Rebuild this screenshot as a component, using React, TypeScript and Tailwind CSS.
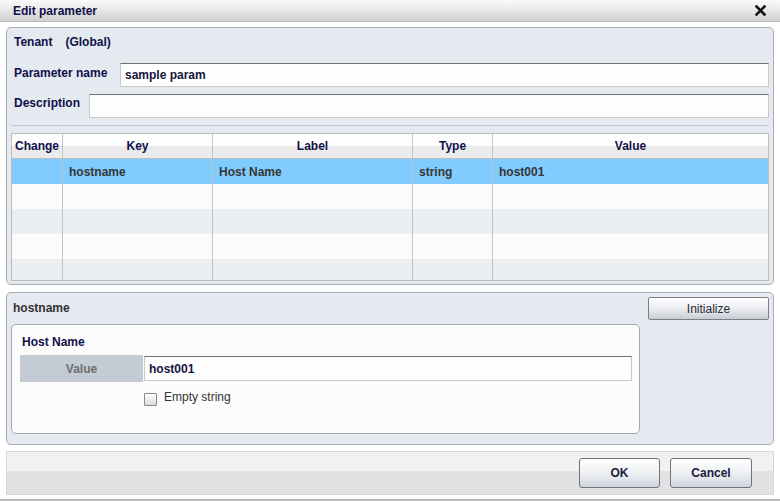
import React from "react";

const font = { fontFamily: '"Liberation Sans", Arial, sans-serif' };

function Input({ value, className }: { value?: string; className?: string }) {
  return (
    <div
      className={
        "flex items-center bg-[#fefefe] border border-[#c9c9c9] border-t-[#6f6f6f] px-[4px] text-[12px] font-bold text-[#151540] " +
        (className || "")
      }
    >
      {value}
    </div>
  );
}

const cols = ["Change", "Key", "Label", "Type", "Value"];
const widths = ["w-[51px]", "w-[150px]", "w-[200px]", "w-[80px]", "flex-1"];

function Row({ cells, bg }: { cells: string[]; bg: string }) {
  return (
    <div className={"flex h-[25px] shrink-0 " + bg}>
      {cells.map((c, i) => (
        <div
          key={i}
          className={
            widths[i] +
            " flex items-center px-[6px] text-[12px] font-bold text-[#363636] " +
            (i < 4 ? "border-r border-[#c4c4c4]" : "")
          }
        >
          {c}
        </div>
      ))}
    </div>
  );
}

export default function App() {
  return (
    <div className="w-[780px] h-[501px] bg-white flex flex-col overflow-hidden" style={font}>
      {/* title bar */}
      <div className="h-[22px] shrink-0 flex items-center justify-between pl-[13px] pr-[14px] bg-gradient-to-b from-[#fbfbfb] via-[#e6e6e6] to-[#cfcfcf] border-b border-[#b9b9b9]">
        <span className="text-[12px] font-bold text-[#10104a]">Edit parameter</span>
        <svg width="11" height="11" viewBox="0 0 11 11">
          <path d="M1.5 1.5 L9.5 9.5 M9.5 1.5 L1.5 9.5" stroke="#111" strokeWidth="2.6" strokeLinecap="square" />
        </svg>
      </div>

      <div className="flex flex-col px-[6px]">
        {/* top panel */}
        <div className="mt-[5px] h-[258px] rounded-[5px] border border-[#a9adb4] bg-[#e5e9f0] px-[4px] flex flex-col">
          <div className="mt-[6px] h-[16px] flex items-center pl-[3px] gap-[13px] text-[12px] font-bold text-[#10104a]">
            <span>Tenant</span>
            <span>(Global)</span>
          </div>
          <div className="mt-[13px] h-[24px] flex items-center pl-[3px]">
            <span className="w-[106px] pb-[4px] text-[12px] font-bold text-[#10104a]">Parameter name</span>
            <Input value="sample param" className="flex-1 h-[24px]" />
          </div>
          <div className="mt-[7px] h-[24px] flex items-center pl-[3px]">
            <span className="w-[75px] pb-[6px] text-[12px] font-bold text-[#10104a]">Description</span>
            <Input className="flex-1 h-[24px]" />
          </div>
          <div className="mt-[7px] h-px bg-[#c5c9cf]" />
          {/* table */}
          <div className="mt-[7px] h-[148px] border border-[#bdbdbd] bg-[#fcfcfc] flex flex-col overflow-hidden">
            <div className="flex h-[25px] shrink-0 border-b border-[#bdbdbd] bg-gradient-to-b from-[#fdfdfd] from-50% to-[#ebebeb] to-50%">
              {cols.map((c, i) => (
                <div
                  key={c}
                  className={
                    widths[i] +
                    " flex items-center justify-center text-[12px] font-bold text-[#10104a] " +
                    (i < 4 ? "border-r border-[#c4c4c4]" : "")
                  }
                >
                  {c}
                </div>
              ))}
            </div>
            <Row cells={["", "hostname", "Host Name", "string", "host001"]} bg="bg-[#80ccff]" />
            <Row cells={["", "", "", "", ""]} bg="bg-[#fcfcfc]" />
            <Row cells={["", "", "", "", ""]} bg="bg-[#ebeff2]" />
            <Row cells={["", "", "", "", ""]} bg="bg-[#fcfcfc]" />
            <Row cells={["", "", "", "", ""]} bg="bg-[#ebeff2]" />
          </div>
        </div>

        {/* bottom panel */}
        <div className="mt-[7px] h-[153px] rounded-[5px] border border-[#a9adb4] bg-[#e5e9f0] pt-[4px] px-[4px] flex gap-[8px]">
          <div className="flex-1 flex flex-col">
            <div className="h-[22px] flex items-center pl-[2px] text-[12px] font-bold text-[#333]">hostname</div>
            <div className="mt-[5px] h-[110px] rounded-[5px] border border-[#a5a8ad] bg-[#fcfcfc] flex flex-col pl-[8px] pr-[7px]">
              <div className="mt-[9px] h-[16px] flex items-center pl-[2px] text-[12px] font-bold text-[#10104a]">Host Name</div>
              <div className="mt-[5px] h-[27px] flex items-center">
                <div className="w-[123px] h-[27px] bg-[#c3cbd5] flex items-center justify-center text-[12px] font-bold text-[#6e6e6e]">
                  Value
                </div>
                <Input value="host001" className="flex-1 h-[25px] ml-[1px] text-[#222]" />
              </div>
              <div className="mt-[8px] flex items-start pl-[124px] gap-[7px]">
                <div className="mt-[3px] w-[13px] h-[13px] border border-[#8a8a8a] rounded-[1px] bg-gradient-to-b from-[#ffffff] to-[#dcdcdc]" />
                <span className="text-[12px] leading-[14px] text-[#333]">Empty string</span>
              </div>
            </div>
          </div>
          <div className="w-[121px]">
            <div className="h-[23px] rounded-[2px] border border-[#7b7f86] bg-gradient-to-b from-[#ffffff] via-[#eceef1] to-[#c9cdd4] flex items-center justify-center text-[12px] text-[#2a2a3a]">
              Initialize
            </div>
          </div>
        </div>

        {/* footer */}
        <div className="mt-[6px] h-[44px] border border-[#d6d6d6] bg-gradient-to-b from-[#f1f1f1] from-45% to-[#e2e2e2] to-45% flex items-center justify-end gap-[10px] pr-[21px]">
          <div className="w-[81px] h-[30px] rounded-[3px] border border-[#6f737a] bg-gradient-to-b from-[#ffffff] via-[#eef0f3] to-[#cfd4dc] flex items-center justify-center text-[12px] font-bold text-[#1a1a40]">
            OK
          </div>
          <div className="w-[82px] h-[30px] rounded-[3px] border border-[#6f737a] bg-gradient-to-b from-[#ffffff] via-[#eef0f3] to-[#cfd4dc] flex items-center justify-center text-[12px] font-bold text-[#1a1a40]">
            Cancel
          </div>
        </div>
      </div>
      <div className="mt-[4px] h-[2px] bg-[#b9b9b9]" />
    </div>
  );
}
